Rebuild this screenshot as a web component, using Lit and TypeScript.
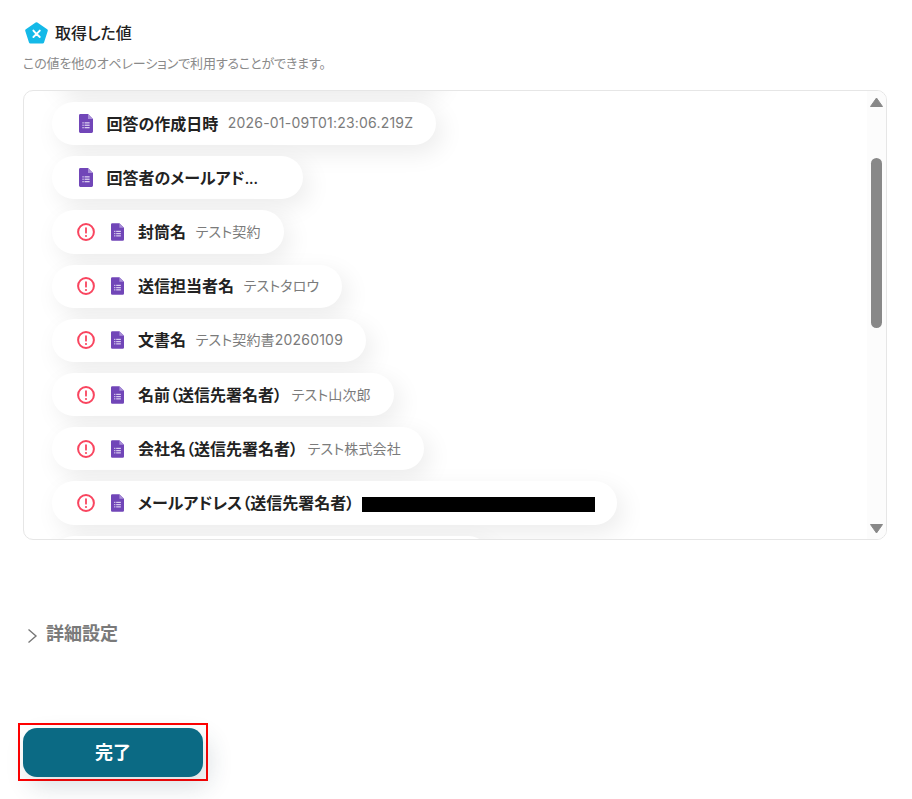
import { LitElement, html, css, svg } from "lit";
import { customElement } from "lit/decorators.js";

interface Row { label: string; value?: string; warn?: boolean; redacted?: boolean; dots?: boolean }

const ROWS: Row[] = [
  { label: "回答の作成日時", value: "2026-01-09T01:23:06.219Z" },
  { label: "回答者のメールアド", dots: true },
  { label: "封筒名", value: "テスト契約", warn: true },
  { label: "送信担当者名", value: "テストタロウ", warn: true },
  { label: "文書名", value: "テスト契約書20260109", warn: true },
  { label: "名前（送信先署名者）", value: "テスト山次郎", warn: true },
  { label: "会社名（送信先署名者）", value: "テスト株式会社", warn: true },
  { label: "メールアドレス（送信先署名者）", warn: true, redacted: true },
];

const docIcon = svg`<svg class="doc" viewBox="0 0 14 19" aria-hidden="true">
  <path fill="#7146b8" d="M1.4 0H9l5 5v12.6a1.4 1.4 0 0 1-1.4 1.4H1.4A1.4 1.4 0 0 1 0 17.6V1.4A1.4 1.4 0 0 1 1.4 0Z"/>
  <path fill="#a98fd8" d="M9 0l5 5H9Z"/>
  <g fill="#d9cdef"><rect x="3.4" y="8.2" width="1.3" height="1.3"/><rect x="3.4" y="10.6" width="1.3" height="1.3"/><rect x="3.4" y="13" width="1.3" height="1.3"/>
  <rect x="5.6" y="8.2" width="5" height="1.3"/><rect x="5.6" y="10.6" width="5" height="1.3"/><rect x="5.6" y="13" width="5" height="1.3"/></g>
</svg>`;

const warnIcon = svg`<svg class="warn" viewBox="0 0 18 18" aria-hidden="true">
  <circle cx="9" cy="9" r="7.9" fill="none" stroke="#f9455f" stroke-width="2"/>
  <rect x="8.1" y="4.2" width="1.8" height="6.4" rx=".9" fill="#f9455f"/>
  <circle cx="9" cy="13" r="1.1" fill="#f9455f"/>
</svg>`;

@customElement("app-root")
export class AppRoot extends LitElement {
  static styles = css`
    :host {
      display: block;
      height: 799px;
      box-sizing: border-box;
      padding: 22px 25px 0 23px;
      background: #fff;
      overflow: hidden;
      font-family: Inter, "Noto Sans CJK JP", sans-serif;
      font-feature-settings: "palt";
    }
    .head { display: flex; align-items: center; height: 22px; padding-left: 2px; gap: 7px; }
    .logo { width: 23px; height: 22px; flex: none; }
    .title { font-size: 16px; font-weight: 500; color: #222; margin-top: -2px; }
    .sub { margin: 10px 0 0; font-size: 13px; line-height: 18px; letter-spacing: -.12px; color: #8a8a8a; }
    .box {
      display: flex;
      box-sizing: border-box;
      height: 450px;
      margin-top: 18px;
      border: 1px solid #e6e6e6;
      border-radius: 10px;
      overflow: hidden;
    }
    .list {
      flex: 1;
      min-width: 0;
      display: flex;
      flex-direction: column;
      align-items: flex-start;
      gap: 11px;
      padding-left: 28px;
      margin-top: -43.2px;
    }
    .pill {
      display: flex;
      align-items: center;
      box-sizing: border-box;
      height: 43.2px;
      flex: none;
      padding: 0 23px 0 27px;
      border-radius: 22px;
      background: #fff;
      box-shadow: 6px 8px 24px rgba(0, 0, 0, .08);
    }
    .pill.warned { padding-left: 25px; }
    .pill.ghost-a { width: 385px; }
    .pill.ghost-b { width: 438px; }
    .pill.has-dots { padding-right: 45px; }
    .pill.redacted { padding-right: 22px; }
    .warn { width: 18px; height: 18px; flex: none; margin-right: 16px; }
    .doc { width: 14px; height: 19px; flex: none; margin-right: 13.5px; }
    .warned .doc { width: 13px; height: 18px; margin-right: 14px; }
    .label { font-size: 16px; font-weight: 600; color: #222; white-space: nowrap; margin-top: -2px; }
    .dots { font-size: 14px; }
    .value { margin-left: 9.5px; font-size: 14px; letter-spacing: .2px; color: #7b7b7b; white-space: nowrap; margin-top: -2px; }
    .redact { width: 233px; height: 15px; margin: 3px 0 0 8px; background: #000; flex: none; }
    .track {
      flex: none;
      width: 19px;
      display: flex;
      flex-direction: column;
      align-items: center;
      padding: 6px 0 5px;
      box-sizing: border-box;
      background: #fcfcfc;
    }
    .arrow { width: 13px; height: 10px; flex: none; }
    .thumb { width: 11px; height: 170px; margin-top: 51px; border-radius: 6px; background: #888; flex: none; }
    .down { margin-top: auto; }
    .more { display: flex; align-items: center; gap: 8px; margin: 79px 0 0 4px; height: 26px; }
    .chev { width: 11px; height: 16px; flex: none; margin-top: 8px; }
    .more span { font-size: 18px; font-weight: 600; color: #7a7a7a; }
    .done-wrap { display: inline-block; margin: 78px 0 0 -5px; padding: 3px 3px 2px; border: 2px solid #f00; }
    .done {
      display: block;
      width: 180px;
      height: 49px;
      padding: 0 0 4px;
      border: 0;
      border-radius: 14px;
      background: #0b6a84;
      color: #fff;
      font: inherit;
      font-size: 18px;
      font-weight: 700;
      box-shadow: 6px 10px 24px rgba(30, 60, 80, .16);
    }
  `;

  private pill(r: Row) {
    return html`<div class="pill ${r.warn ? "warned" : ""} ${r.dots ? "has-dots" : ""} ${r.redacted ? "redacted" : ""}">
      ${r.warn ? warnIcon : ""}${docIcon}
      <span class="label">${r.label}${r.dots ? html`<span class="dots">...</span>` : ""}</span>
      ${r.value ? html`<span class="value">${r.value}</span>` : ""}
      ${r.redacted ? html`<span class="redact"></span>` : ""}
    </div>`;
  }

  render() {
    return html`
      <div class="head">
        <svg class="logo" viewBox="0 0 23 22" aria-hidden="true">
          <path fill="#14b9e8" stroke="#14b9e8" stroke-width="3" stroke-linejoin="round" d="M11.5 1.8 21.3 8.6 17.6 20H5.4L1.7 8.6Z"/>
          <path fill="none" stroke="#fff" stroke-width="1.9" stroke-linecap="round" d="M8.4 8.6Q11 11.8 14.8 15M14.8 8.6Q11.8 11.8 8.4 15"/>
        </svg>
        <span class="title">取得した値</span>
      </div>
      <p class="sub">この値を他のオペレーションで利用することができます。</p>
      <div class="box">
        <div class="list">
          <div class="pill ghost-a"></div>
          ${ROWS.map((r) => this.pill(r))}
          <div class="pill ghost-b"></div>
        </div>
        <div class="track">
          <svg class="arrow" viewBox="0 0 13 10" aria-hidden="true"><path fill="#888" stroke="#888" stroke-linejoin="round" d="M6.5 1 12.5 9.5H.5Z"/></svg>
          <div class="thumb"></div>
          <svg class="arrow down" viewBox="0 0 13 10" aria-hidden="true"><path fill="#888" stroke="#888" stroke-linejoin="round" d="M.5.5h12L6.5 9Z"/></svg>
        </div>
      </div>
      <div class="more">
        <svg class="chev" viewBox="0 0 11 16" aria-hidden="true"><path fill="none" stroke="#777" stroke-width="1.4" d="M1.5 1.5 9 8l-7.5 6.5"/></svg>
        <span>詳細設定</span>
      </div>
      <div class="done-wrap"><button class="done">完了</button></div>
    `;
  }
}
